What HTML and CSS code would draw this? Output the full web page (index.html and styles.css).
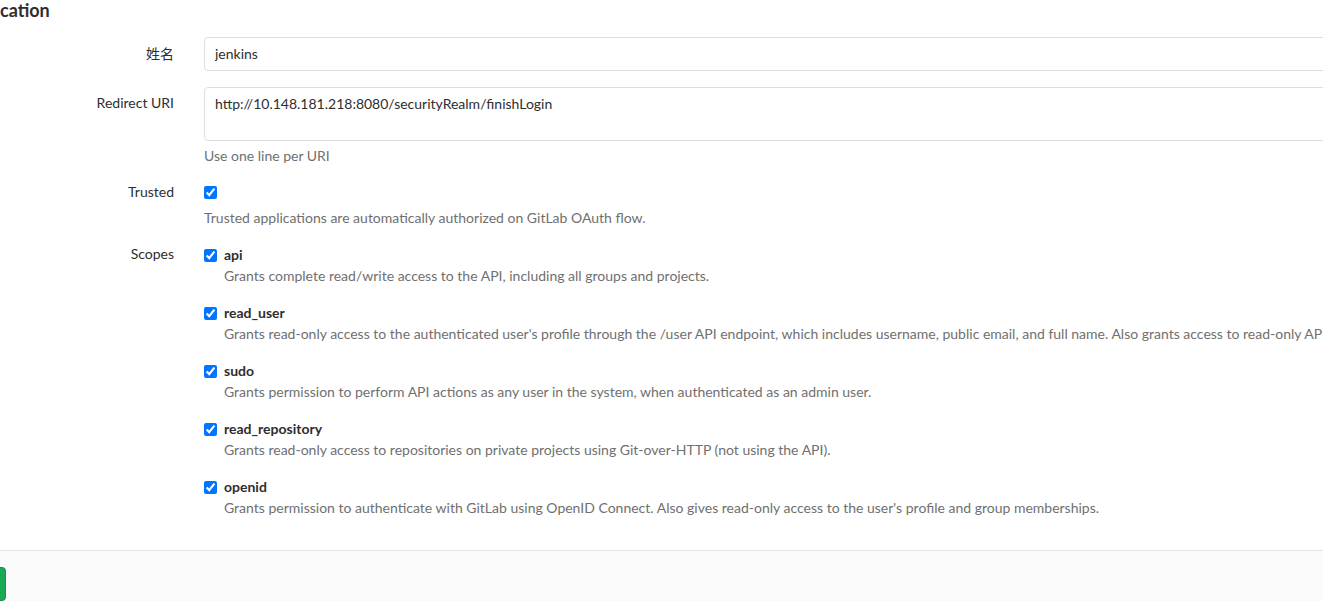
FILE: index.html
```html
<!DOCTYPE html>
<html lang="en">
<head>
<meta charset="utf-8">
<title>Edit Application</title>
<link rel="stylesheet" href="styles.css">
</head>
<body>
<div class="page">
  <h3 class="page-title">cation</h3>
  <form class="app-form">
    <div class="form-row">
      <label class="row-label label-input" for="name">姓名</label>
      <div class="row-field">
        <input id="name" class="text-input" type="text" value="jenkins">
      </div>
    </div>
    <div class="form-row">
      <label class="row-label label-textarea" for="uri">Redirect URI</label>
      <div class="row-field">
        <textarea id="uri" class="text-area">http://10.148.181.218:8080/securityRealm/finishLogin</textarea>
        <p class="help">Use one line per URI</p>
      </div>
    </div>
    <div class="form-row">
      <label class="row-label" for="trusted">Trusted</label>
      <div class="row-field">
        <div class="check-line"><input id="trusted" class="check" type="checkbox" checked></div>
        <p class="help help-check">Trusted applications are automatically authorized on GitLab OAuth flow.</p>
      </div>
    </div>
    <div class="form-row">
      <span class="row-label">Scopes</span>
      <div class="row-field scopes">
        <div class="scope">
          <label class="scope-name"><input class="check" type="checkbox" checked> <span>api</span></label>
          <p class="scope-desc">Grants complete read/write access to the API, including all groups and projects.</p>
        </div>
        <div class="scope">
          <label class="scope-name"><input class="check" type="checkbox" checked> <span>read_user</span></label>
          <p class="scope-desc">Grants read-only access to the authenticated user's profile through the /user API endpoint, which includes username, public email, and full name. Also grants access to read-only API endpoints under /users.</p>
        </div>
        <div class="scope">
          <label class="scope-name"><input class="check" type="checkbox" checked> <span>sudo</span></label>
          <p class="scope-desc">Grants permission to perform API actions as any user in the system, when authenticated as an admin user.</p>
        </div>
        <div class="scope">
          <label class="scope-name"><input class="check" type="checkbox" checked> <span>read_repository</span></label>
          <p class="scope-desc">Grants read-only access to repositories on private projects using Git-over-HTTP (not using the API).</p>
        </div>
        <div class="scope">
          <label class="scope-name"><input class="check" type="checkbox" checked> <span>openid</span></label>
          <p class="scope-desc">Grants permission to authenticate with GitLab using OpenID Connect. Also gives read-only access to the user's profile and group memberships.</p>
        </div>
      </div>
    </div>
    <div class="form-actions">
      <button type="submit" class="btn-save">Save application</button>
    </div>
  </form>
</div>
</body>
</html>
```

FILE: styles.css
```css
html, body {
  margin: 0;
  padding: 0;
  background: #ffffff;
  overflow: hidden;
}

body {
  font-family: "Lato", "Noto Sans CJK SC", sans-serif;
  font-size: 14px;
  line-height: 20px;
  color: #2e2e2e;
  width: 1323px;
  height: 601px;
}

.page {
  width: 1600px;
}

.page-title {
  margin: 0 0 17px 0;
  font-size: 18px;
  line-height: 20px;
  font-weight: 700;
  color: #2e2e2e;
}

.form-row {
  display: grid;
  grid-template-columns: 174px 1300px;
  column-gap: 30px;
  margin-bottom: 16px;
}

.row-label {
  text-align: right;
  color: #2e2e2e;
}

.label-input {
  padding-top: 7px;
}

.label-textarea {
  padding-top: 6px;
}

.text-input,
.text-area {
  box-sizing: border-box;
  width: 100%;
  font: inherit;
  color: #2e2e2e;
  border: 1px solid #dfdfdf;
  border-radius: 4px;
  padding: 6px 10px;
  background: #fff;
  outline: none;
  display: block;
  margin: 0;
}

.text-input {
  height: 34px;
  padding-top: 5px;
  padding-bottom: 7px;
}

.text-area {
  height: 54px;
  resize: none;
  line-height: 20px;
  padding-top: 6px;
}

.help {
  margin: 5px 0 0 0;
  color: #707070;
}

.help-check {
  margin-top: 6px;
}

.check-line {
  height: 20px;
  display: flex;
  align-items: center;
}

.check {
  width: 13px;
  height: 13px;
  margin: 0;
  accent-color: #0075ff;
}

.scopes {
  padding-top: 1px;
}

.scope {
  margin-bottom: 17px;
}

.scope:last-child {
  margin-bottom: 0;
}

.scope-name {
  display: flex;
  align-items: center;
  gap: 7px;
  height: 20px;
  font-weight: 700;
  color: #2e2e2e;
}

.scope-desc {
  margin: 1px 0 0 20px;
  color: #707070;
  white-space: nowrap;
}

.form-actions {
  margin-top: 32px;
  border-top: 1px solid #e5e5e5;
  background: #fafafa;
  padding: 16px 0 40px 0;
  height: 60px;
}

.btn-save {
  display: block;
  margin-left: -120px;
  width: 126px;
  height: 34px;
  border: 1px solid #168f48;
  border-radius: 4px;
  background: #1aaa55;
  color: #fff;
  font: inherit;
  padding: 6px 10px;
}
```
